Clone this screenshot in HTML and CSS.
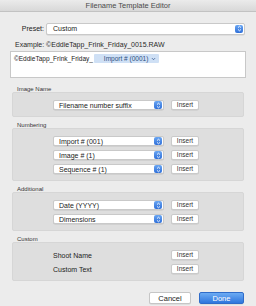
FILE: index.html
```html
<!DOCTYPE html>
<html>
<head>
  <meta charset="UTF-8">
  <title>Filename Template Editor</title>
  <link rel="stylesheet" href="styles.css">
</head>
<body>

  <div class="dialog">
    <div class="titlebar">Filename Template Editor</div>

    <div class="content">
      <div class="preset-row">
        <span class="preset-label">Preset:</span>
        <div class="select select-wide">
          <span class="select-text">Custom</span>
          <span class="stepper"><svg width="5" height="7" viewBox="0 0 5 7"><path d="M1 2.6 L2.5 1.2 L4 2.6 M1 4.4 L2.5 5.8 L4 4.4" fill="none" stroke="#fff" stroke-width="0.9"/></svg></span>
        </div>
      </div>

      <div class="example">Example: ©EddieTapp_Frink_Friday_0015.RAW</div>

      <div class="template-field">
        ©EddieTapp_Frink_Friday_<span class="token">Import # (0001)<svg class="token-arrow" width="5" height="4" viewBox="0 0 5 4"><path d="M1 1.2 L2.5 2.7 L4 1.2" fill="none" stroke="#3a5f95" stroke-width="0.9"/></svg></span>
      </div>

      <!-- Image Name -->
      <div class="section-label">Image Name</div>
      <div class="group">
        <div class="row">
          <div class="select">
            <span class="select-text">Filename number suffix</span>
            <span class="stepper"><svg width="5" height="7" viewBox="0 0 5 7"><path d="M1 2.6 L2.5 1.2 L4 2.6 M1 4.4 L2.5 5.8 L4 4.4" fill="none" stroke="#fff" stroke-width="0.9"/></svg></span>
          </div>
          <button class="insert">Insert</button>
        </div>
      </div>

      <!-- Numbering -->
      <div class="section-label">Numbering</div>
      <div class="group">
        <div class="row">
          <div class="select">
            <span class="select-text">Import # (001)</span>
            <span class="stepper"><svg width="5" height="7" viewBox="0 0 5 7"><path d="M1 2.6 L2.5 1.2 L4 2.6 M1 4.4 L2.5 5.8 L4 4.4" fill="none" stroke="#fff" stroke-width="0.9"/></svg></span>
          </div>
          <button class="insert">Insert</button>
        </div>
        <div class="row">
          <div class="select">
            <span class="select-text">Image # (1)</span>
            <span class="stepper"><svg width="5" height="7" viewBox="0 0 5 7"><path d="M1 2.6 L2.5 1.2 L4 2.6 M1 4.4 L2.5 5.8 L4 4.4" fill="none" stroke="#fff" stroke-width="0.9"/></svg></span>
          </div>
          <button class="insert">Insert</button>
        </div>
        <div class="row">
          <div class="select">
            <span class="select-text">Sequence # (1)</span>
            <span class="stepper"><svg width="5" height="7" viewBox="0 0 5 7"><path d="M1 2.6 L2.5 1.2 L4 2.6 M1 4.4 L2.5 5.8 L4 4.4" fill="none" stroke="#fff" stroke-width="0.9"/></svg></span>
          </div>
          <button class="insert">Insert</button>
        </div>
      </div>

      <!-- Additional -->
      <div class="section-label">Additional</div>
      <div class="group">
        <div class="row">
          <div class="select">
            <span class="select-text">Date (YYYY)</span>
            <span class="stepper"><svg width="5" height="7" viewBox="0 0 5 7"><path d="M1 2.6 L2.5 1.2 L4 2.6 M1 4.4 L2.5 5.8 L4 4.4" fill="none" stroke="#fff" stroke-width="0.9"/></svg></span>
          </div>
          <button class="insert">Insert</button>
        </div>
        <div class="row">
          <div class="select">
            <span class="select-text">Dimensions</span>
            <span class="stepper"><svg width="5" height="7" viewBox="0 0 5 7"><path d="M1 2.6 L2.5 1.2 L4 2.6 M1 4.4 L2.5 5.8 L4 4.4" fill="none" stroke="#fff" stroke-width="0.9"/></svg></span>
          </div>
          <button class="insert">Insert</button>
        </div>
      </div>

      <!-- Custom -->
      <div class="section-label">Custom</div>
      <div class="group">
        <div class="row">
          <span class="row-label">Shoot Name</span>
          <button class="insert">Insert</button>
        </div>
        <div class="row">
          <span class="row-label">Custom Text</span>
          <button class="insert">Insert</button>
        </div>
      </div>

      <div class="actions">
        <button class="btn">Cancel</button>
        <button class="btn btn-primary">Done</button>
      </div>
    </div>
  </div>

</body>
</html>
```

FILE: styles.css
```css
body {
  margin: 0;
  padding: 0;
  background-color: #ececec;
  font-family: "Liberation Sans", Arial, sans-serif;
  color: #222222;
}
.dialog {
  width: 256px;
  height: 306px;
  background-color: #ececec;
  overflow: hidden;
}
/* Title bar */
.titlebar {
  height: 11px;
  line-height: 11px;
  text-align: center;
  font-size: 7.5px;
  color: #4a4a4a;
  background: linear-gradient(#ebebeb, #d8d8d8);
  border-bottom: 1px solid #c2c2c2;
}
.content {
  padding: 11px 10px 0 10px;
}
/* Preset */
.preset-row {
  display: flex;
  align-items: center;
  height: 11px;
}
.preset-label {
  width: 34px;
  margin-right: 2px;
  text-align: right;
  font-size: 7px;
}
.select {
  display: flex;
  align-items: center;
  width: 109px;
  height: 8px;
  background-color: #ffffff;
  border: 1px solid #c9c9c9;
  border-radius: 2px;
  box-shadow: 0 0.5px 0.5px rgba(0, 0, 0, 0.12);
}
.select-wide {
  flex: 1;
  height: 10px;
  margin-right: 1px;
}
.select-text {
  flex: 1;
  padding-left: 5px;
  font-size: 7px;
  white-space: nowrap;
}
.select-wide .select-text {
  padding-left: 6px;
}
.stepper {
  display: flex;
  align-items: center;
  justify-content: center;
  width: 8px;
  height: 8px;
  margin-right: 1px;
  border-radius: 2px;
  background: linear-gradient(#6aa6f2, #2f6fd8);
}
/* Example + template */
.example {
  margin-top: 7px;
  padding-left: 5px;
  height: 8px;
  line-height: 8px;
  font-size: 7px;
  color: #2a2a2a;
}
.template-field {
  margin-top: 2px;
  height: 27px;
  box-sizing: border-box;
  background-color: #ffffff;
  border: 1px solid #c8c8c8;
  padding: 2px 0 0 3px;
  font-size: 6.5px;
  line-height: 9px;
  display: flex;
  align-items: flex-start;
  white-space: nowrap;
}
.token {
  display: inline-flex;
  align-items: center;
  margin-left: 1px;
  padding: 0 3px 0 10px;
  height: 9px;
  background-color: #cfe0f5;
  color: #2d4f80;
  border-radius: 1px;
}
.token-arrow {
  margin-left: 3px;
}
/* Sections */
.section-label {
  margin-top: 5px;
  padding-left: 7px;
  height: 6px;
  line-height: 6px;
  font-size: 6px;
  color: #333333;
}
.template-field + .section-label {
  margin-top: 8px;
}
.group {
  margin: 0 2px;
  padding: 7px 0 6px 40px;
  background-color: #dedede;
  border: 1px solid #d6d6d6;
  border-radius: 2px;
  display: flex;
  flex-direction: column;
  gap: 4px;
  box-sizing: border-box;
}
.row {
  display: flex;
  align-items: center;
  height: 10px;
  gap: 7px;
}
.row-label {
  width: 111px;
  font-size: 7px;
}
.insert {
  width: 28px;
  height: 10px;
  padding: 0;
  background-color: #ffffff;
  border: 1px solid #cacaca;
  border-radius: 2px;
  font-family: "Liberation Sans", Arial, sans-serif;
  font-size: 6.5px;
  line-height: 8px;
  color: #333333;
  box-shadow: 0 0.5px 0.5px rgba(0, 0, 0, 0.1);
}
/* Bottom buttons */
.actions {
  display: flex;
  justify-content: flex-end;
  gap: 8px;
  margin-top: 11px;
  padding-right: 2px;
}
.btn {
  width: 42px;
  height: 12px;
  padding: 0;
  background-color: #ffffff;
  border: 1px solid #c6c6c6;
  border-radius: 2px;
  font-family: "Liberation Sans", Arial, sans-serif;
  font-size: 7.5px;
  color: #222222;
  box-shadow: 0 0.5px 0.5px rgba(0, 0, 0, 0.12);
}
.btn-primary {
  width: 45px;
  background: linear-gradient(#6cabf3, #2f76dd);
  border-color: #2f6cc9;
  color: #ffffff;
}
```
